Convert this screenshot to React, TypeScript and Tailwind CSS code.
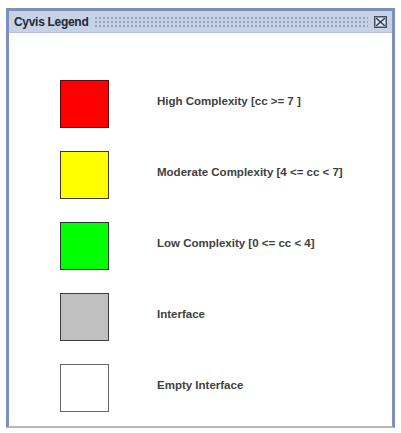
const items = [
  { label: "High Complexity [cc >= 7 ]", swatch: "bg-[#ff0000] border-[#5c0a0a]" },
  { label: "Moderate Complexity [4 <= cc < 7]", swatch: "bg-[#ffff00] border-[#3a3a20]" },
  { label: "Low Complexity [0 <= cc < 4]", swatch: "bg-[#00ff00] border-[#1f3a1f]" },
  { label: "Interface", swatch: "bg-[#c0c0c0] border-[#3c3c3c]" },
  { label: "Empty Interface", swatch: "bg-white border-[#6a6a6a]" },
];

function CloseBox() {
  return (
    <div className="w-[13px] h-[12px] border border-[#3d4b66] bg-[#dfe6f2] flex items-center justify-center">
      <svg width="11" height="10" viewBox="0 0 11 10">
        <path d="M1 1 L10 9 M10 1 L1 9" stroke="#2b3750" strokeWidth="1.4" />
        <rect x="0.5" y="0.5" width="10" height="9" fill="none" stroke="#8c9ab5" strokeWidth="1" />
      </svg>
    </div>
  );
}

export default function App() {
  return (
    <div className="w-[401px] h-[433px] bg-white pt-[8px] pl-[6px] font-['Liberation_Sans',Arial,sans-serif]">
      <div className="w-[389px] h-[420px] border-x-[3px] border-t-[3px] border-b-[2px] border-x-[#7d8fbb] border-t-[#7d8fbb] border-b-[#b5b8c0] flex flex-col">
        {/* title bar */}
        <div className="h-[22px] bg-[#c7d2e7] flex items-center pl-[5px] pr-[5px] gap-[6px] border-b border-[#b3c0da]">
          <span className="text-[12px] font-bold text-[#222833] tracking-[-0.3px] whitespace-nowrap">
            Cyvis Legend
          </span>
          <div className="flex-1 h-[12px] bg-[radial-gradient(circle,#8a9ec6_0.9px,transparent_1.3px)] bg-[length:4px_4px] opacity-90" />
          <CloseBox />
        </div>

        {/* legend rows */}
        <div className="flex-1 bg-white flex flex-col gap-[23px] pt-[47px] pl-[51px]">
          {items.map((it) => (
            <div key={it.label} className="flex items-center gap-[48px]">
              <div className={`w-[49px] h-[48px] border ${it.swatch}`} />
              <span className="text-[11.5px] font-bold text-[#404040] whitespace-nowrap pb-[5px]">
                {it.label}
              </span>
            </div>
          ))}
        </div>
      </div>
    </div>
  );
}
